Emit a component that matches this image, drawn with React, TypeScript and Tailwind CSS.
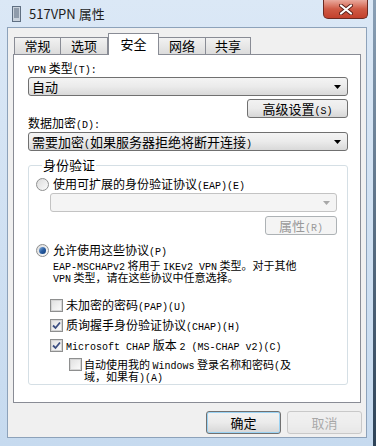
import React from 'react';

// SimSun-style half-width glyphs (6px advance)
function M({ children }: { children: React.ReactNode }) {
  return <span className="font-['Liberation_Mono',monospace] text-[10px] leading-none">{children}</span>;
}

function Arrow({ disabled = false }: { disabled?: boolean }) {
  return (
    <svg width="7" height="4" viewBox="0 0 7 4" className="shrink-0">
      <path d="M0 0 H7 L3.5 4 Z" fill={disabled ? '#a7a7a7' : '#000'} />
    </svg>
  );
}

function Select({ children, disabled = false }: { children?: React.ReactNode; disabled?: boolean }) {
  return (
    <div
      className={`flex h-[19px] items-center justify-between rounded-[3px] border pl-[3px] pr-[6px] ${
        disabled
          ? 'border-[#c3c3c3] bg-[#f4f4f4]'
          : 'border-[#707070] bg-gradient-to-b from-[#f4f4f4] via-[#ebebeb] to-[#d9d9d9]'
      }`}
    >
      <span className="truncate text-[13px] leading-[17px]">{children}</span>
      <Arrow disabled={disabled} />
    </div>
  );
}

function Button({ children, disabled = false, className = '' }: { children: React.ReactNode; disabled?: boolean; className?: string }) {
  return (
    <div
      className={`flex items-center justify-center rounded-[3px] border ${
        disabled
          ? 'border-[#adb2b5] bg-[#f4f4f4] text-[#9a9a9a]'
          : 'border-[#707070] bg-gradient-to-b from-[#f2f2f2] via-[#ebebeb] to-[#d6d6d6]'
      } ${className}`}
    >
      <span className="leading-[16px]">{children}</span>
    </div>
  );
}

function Radio({ checked = false }: { checked?: boolean }) {
  return (
    <span className="flex h-[13px] w-[13px] shrink-0 items-center justify-center rounded-full border border-[#8e8f8f] bg-gradient-to-br from-[#dcdcdc] to-[#fbfbfb]">
      {checked && (
        <span className="h-[7px] w-[7px] rounded-full bg-gradient-to-br from-[#8fb7e0] via-[#2a5ea3] to-[#0c3d7a]" />
      )}
    </span>
  );
}

function Check({ checked = false }: { checked?: boolean }) {
  return (
    <span className="flex h-[13px] w-[13px] shrink-0 items-center justify-center border border-[#8e8f8f] bg-white">
      <span className="flex h-[11px] w-[11px] items-center justify-center border border-[#d5d5d5] bg-gradient-to-br from-[#e2e2e2] to-[#fafafa]">
        {checked && (
          <svg width="9" height="9" viewBox="0 0 9 9">
            <path d="M1 4.5 L3.5 7 L8 1.5" fill="none" stroke="#3c4f82" strokeWidth="1.8" />
          </svg>
        )}
      </span>
    </span>
  );
}

function Tab({ label, active = false, w }: { label: string; active?: boolean; w: string }) {
  return active ? (
    <div className={`relative z-10 -mb-px flex h-[22px] ${w} items-start justify-center border border-b-0 border-[#898c95] bg-white pt-[1px] text-[13px] leading-[18px]`}>
      {label}
    </div>
  ) : (
    <div className={`flex h-[17px] ${w} items-center justify-center border border-b-0 border-l-0 border-[#898c95] bg-gradient-to-b from-[#f2f2f2] to-[#dcdcdc] text-[13px] leading-[16px] first:border-l`}>
      {label}
    </div>
  );
}

function Row({ children, className = '' }: { children: React.ReactNode; className?: string }) {
  return <div className={`flex h-[16px] items-center ${className}`}>{children}</div>;
}

export default function App() {
  return (
    <div className="relative h-[446px] w-[376px] overflow-hidden bg-gradient-to-b from-[#dbe8f6] to-[#c6daef] font-['Noto_Sans_CJK_SC',sans-serif] text-[12px] text-black">
      {/* title bar */}
      <div className="flex h-[27px] items-center gap-[8px] pl-[12px]">
        <svg width="9" height="16" viewBox="0 0 9 16">
          <rect x="0.5" y="0.5" width="8" height="15" fill="#c9d2dc" stroke="#5f6f82" />
          <path d="M2 3 H7 M2 5 H7 M2 7 H7 M2 9 H7 M2 11 H7" stroke="#56667a" />
        </svg>
        <span className="text-[13px] text-[#1e1e1e]">517VPN 属性</span>
      </div>
      <div className="absolute right-[8px] top-0 flex h-[19px] w-[45px] items-center justify-center rounded-b-[5px] border border-t-0 border-[#6b2a22] bg-gradient-to-b from-[#e9a99d] via-[#cf5a45] to-[#c2402c]">
        <svg width="14" height="11" viewBox="0 0 14 11">
          <path d="M2 1.5 L12 9.5 M12 1.5 L2 9.5" stroke="#5b2019" strokeWidth="4" strokeLinecap="round" />
          <path d="M2 1.5 L12 9.5 M12 1.5 L2 9.5" stroke="#fff" strokeWidth="2.2" strokeLinecap="round" />
        </svg>
      </div>
      <div className="absolute right-0 top-0 h-full w-[3px] bg-gradient-to-b from-[#8aa0b6] to-[#2e4358]" />

      {/* client area */}
      <div className="ml-[7px] h-[411px] w-[360px] border border-[#8da2ba] bg-[#f0f0f0]">
        <div className="flex h-[26px] items-end pl-[6px]">
          <Tab label="常规" w="w-[47px]" />
          <Tab label="选项" w="w-[47px]" />
          <Tab label="安全" w="w-[51px]" active />
          <Tab label="网络" w="w-[47px]" />
          <Tab label="共享" w="w-[45px]" />
        </div>

        <div className="ml-[5px] h-[349px] w-[348px] border border-[#898c95] bg-white pl-[14px] pr-[12px] pt-[6px]">
          <div className="h-[14px] leading-[14px]">
            <M>VPN</M> 类型<M>(T):</M>
          </div>
          <div className="mt-[2px]">
            <Select>自动</Select>
          </div>
          <div className="mt-[3px] flex justify-end">
            <Button className="h-[19px] w-[101px] text-[13px]">
              高级设置<M>(S)</M>
            </Button>
          </div>
          <div className="-mt-[2px] h-[14px] leading-[14px]">
            数据加密<M>(D):</M>
          </div>
          <div className="mt-[2px]">
            <Select>
              需要加密<M>(</M>如果服务器拒绝将断开连接<M>)</M>
            </Select>
          </div>

          <fieldset className="mt-[7px] rounded-[3px] border border-[#d5dfe5] pb-[2px] pl-[7px] pr-[10px]">
            <legend className="ml-[6px] h-[14px] px-[1px] text-[13px] leading-[14px]">身份验证</legend>
            <Row className="mt-[4px] gap-[4px]">
              <Radio />
              <span className="leading-[16px]">
                使用可扩展的身份验证协议<M>(EAP)(E)</M>
              </span>
            </Row>
            <div className="ml-[14px] mt-[1px]">
              <Select disabled />
            </div>
            <div className="mt-[4px] flex justify-end">
              <Button disabled className="h-[19px] w-[72px] text-[13px]">
                属性<M>(R)</M>
              </Button>
            </div>
            <Row className="mt-[7px] gap-[4px]">
              <Radio checked />
              <span className="leading-[16px]">
                允许使用这些协议<M>(P)</M>
              </span>
            </Row>
            <div className="ml-[17px] mt-[1px] text-[11px]">
              <div className="h-[12px] whitespace-nowrap leading-[12px]">
                <M>EAP-MSCHAPv2</M> 将用于 <M>IKEv2 VPN</M> 类型。对于其他
              </div>
              <div className="h-[12px] whitespace-nowrap leading-[12px]">
                <M>VPN</M> 类型，请在这些协议中任意选择。
              </div>
            </div>
            <Row className="ml-[14px] mt-[14px] gap-[3px]">
              <Check />
              <span className="leading-[16px]">
                未加密的密码<M>(PAP)(U)</M>
              </span>
            </Row>
            <Row className="ml-[14px] mt-[4px] gap-[3px]">
              <Check checked />
              <span className="leading-[16px]">
                质询握手身份验证协议<M>(CHAP)(H)</M>
              </span>
            </Row>
            <Row className="ml-[14px] mt-[4px] gap-[3px]">
              <Check checked />
              <span className="leading-[16px]">
                <M>Microsoft CHAP</M> 版本 <M>2 (MS-CHAP v2)(C)</M>
              </span>
            </Row>
            <div className="ml-[33px] mt-[5px] flex items-start gap-[2px]">
              <Check />
              <div className="text-[11px]">
                <div className="h-[12px] whitespace-nowrap leading-[12px]">
                  自动使用我的 <M>Windows</M> 登录名称和密码<M>(</M>及
                </div>
                <div className="h-[12px] whitespace-nowrap leading-[12px]">
                  域，如果有<M>)(A)</M>
                </div>
              </div>
            </div>
          </fieldset>
        </div>

        <div className="ml-[198px] mt-[8px] flex gap-[6px]">
          <Button className="h-[23px] w-[75px] border-[#3c7fb1] shadow-[inset_0_0_0_1px_#9ad2f3] text-[13px]">
            确定
          </Button>
          <Button className="h-[23px] w-[75px] text-[13px] opacity-30">取消</Button>
        </div>
      </div>
    </div>
  );
}
